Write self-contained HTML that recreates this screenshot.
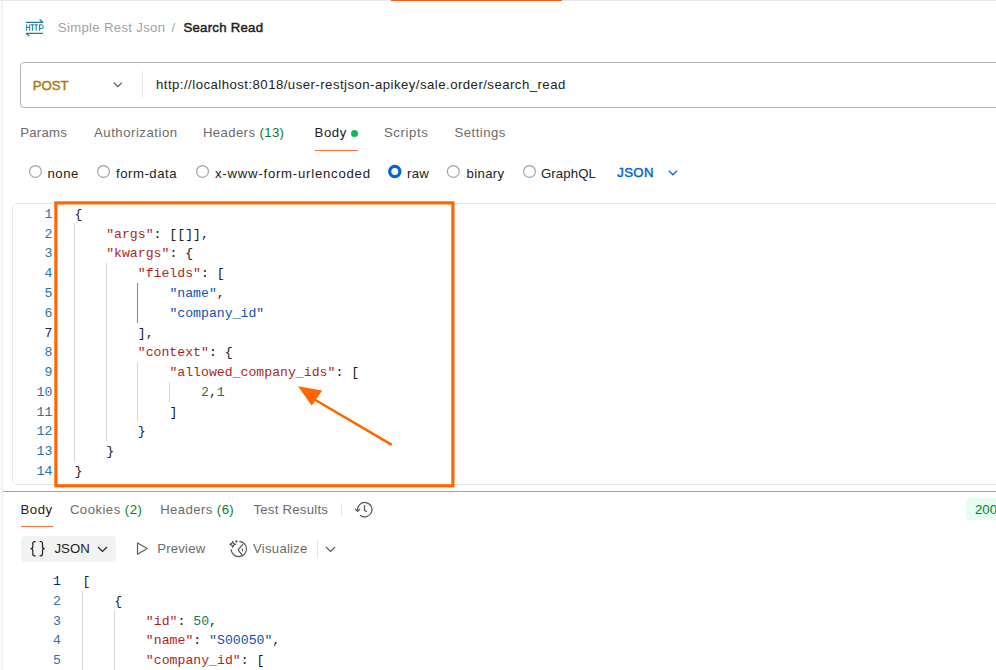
<!DOCTYPE html>
<html><head><meta charset="utf-8">
<style>
html,body{margin:0;padding:0;background:#fff;width:996px;height:670px;overflow:hidden;position:relative}
body{font-family:"Liberation Sans",sans-serif;font-size:13.18px;color:#212121}
.a{position:absolute;white-space:nowrap;line-height:16px;height:16px}
.m{font-family:"Liberation Mono",monospace;font-size:13.18px;line-height:19.77px;height:19.77px}
.gr{color:#007f31}
.k{color:#ad1f22}
.s{color:#0b52ac}
.n{color:#0e7d55}
.ln{position:absolute;text-align:right;width:60px;font-family:"Liberation Mono",monospace;font-size:13.18px;line-height:19.77px;height:19.77px}
.guide{position:absolute;width:1px}
</style></head><body>
<!-- frame -->
<div style="position:absolute;left:0;top:0;width:2px;height:670px;background:#f9f9f9"></div>
<div style="position:absolute;left:2px;top:0;width:1px;height:670px;background:#ededed"></div>
<div style="position:absolute;left:0;top:0;width:996px;height:1px;background:#e8e8e8"></div>
<div style="position:absolute;left:391px;top:0;width:171px;height:1px;background:#ff5a1f"></div>
<!-- http icon -->
<svg style="position:absolute;left:22px;top:16px" width="26" height="22" viewBox="0 0 26 22">
 <g fill="none" stroke="#127f92" stroke-width="1.2" stroke-linecap="butt">
  <path d="M3.8 6.4H21M17.6 3.5L21 6.4"/>
  <path d="M4 17.4H21M7.4 19.9L4 17.4"/>
 </g>
 <g fill="none" stroke="#127f92" stroke-width="1.0" stroke-linecap="butt">
  <path d="M4.7 8.3V14.8M7.7 8.3V14.8M4.7 11.4H7.7"/>
  <path d="M8.7 8.8H12.1M10.4 8.8V14.8"/>
  <path d="M12.5 8.8H15.9M14.2 8.8V14.8"/>
  <path d="M17.6 8.3V14.8M17.6 8.8H19.4Q21.3 8.8 21.3 10.7Q21.3 12.5 19.4 12.5H17.6"/>
 </g>
</svg>
<!-- url box -->
<div style="position:absolute;left:20px;top:62px;width:1000px;height:44px;border:1px solid #b6b6b6;border-radius:4px"></div>
<svg style="position:absolute;left:112px;top:81px" width="12" height="8" viewBox="0 0 12 8"><path d="M1.8 1.6L5.8 5.6L9.8 1.6" fill="none" stroke="#555" stroke-width="1.2"/></svg>
<div style="position:absolute;left:142px;top:71px;width:1px;height:27px;background:#e6e6e6"></div>
<!-- tabs -->
<div style="position:absolute;left:351px;top:130px;width:7px;height:7px;border-radius:50%;background:#0cbb52"></div>
<div style="position:absolute;left:315px;top:150px;width:43px;height:1px;background:#ff6c37"></div>
<!-- radios -->
<svg style="position:absolute;left:0;top:150px" width="700" height="40" viewBox="0 150 700 40">
 <g fill="none" stroke="#a3a3a3" stroke-width="1.15">
  <circle cx="35.45" cy="171.45" r="5.9"/>
  <circle cx="103.5" cy="171.45" r="5.9"/>
  <circle cx="202.5" cy="171.45" r="5.9"/>
  <circle cx="453.3" cy="171.45" r="5.9"/>
  <circle cx="529.5" cy="171.45" r="5.9"/>
 </g>
 <circle cx="394.8" cy="171.5" r="5.1" fill="none" stroke="#0265d2" stroke-width="3.2"/>
</svg>
<svg style="position:absolute;left:667px;top:168px" width="12" height="9" viewBox="0 0 12 9"><path d="M1.7 2.6L5.9 6.8L10.1 2.6" fill="none" stroke="#0265d2" stroke-width="1.3"/></svg>
<!-- editor frame -->
<div style="position:absolute;left:12px;top:205px;width:1px;height:278px;background:#e6e6e6"></div>
<div style="position:absolute;left:14px;top:203px;width:982px;height:1px;background:#e6e6e6"></div>
<div style="position:absolute;left:14px;top:484px;width:982px;height:1px;background:#e6e6e6"></div>
<div style="position:absolute;left:3px;top:491px;width:993px;height:1px;background:#74a9f0"></div>
<!-- annotation rect -->
<svg style="position:absolute;left:0;top:0;z-index:5" width="996" height="670" viewBox="0 0 996 670">
 <rect x="55.9" y="202.9" width="397" height="282.9" fill="none" stroke="#ff6600" stroke-width="3.2"/>
 <path d="M391.8 444.9L312 398" stroke="#ff6600" stroke-width="2.6" fill="none"/>
 <path d="M298 386.2L322.2 390.4L311.8 405.8Z" fill="#ff6600"/>
</svg>
<!-- response tabs -->
<div style="position:absolute;left:21px;top:526px;width:32px;height:1px;background:#ff6c37"></div>
<div style="position:absolute;left:341px;top:503px;width:1px;height:13px;background:#e6e6e6"></div>
<svg style="position:absolute;left:350px;top:498px" width="28" height="24" viewBox="0 0 28 24"><g fill="none" stroke="#555" stroke-width="1.25" stroke-linejoin="round" stroke-linecap="round">
 <path d="M10.4 17.4A7.2 7.2 0 1 0 7.6 12.6"/>
 <path d="M5.5 11.3L7.6 13.4L9.7 11.4"/>
 <path d="M14.5 7.5V12.2L16.5 13.6"/>
</g></svg>
<div style="position:absolute;left:966px;top:498px;width:40px;height:22px;border-radius:4px;background:#e6fdf0"></div>
<!-- response toolbar -->
<div style="position:absolute;left:21px;top:536px;width:95px;height:26px;border-radius:4px;background:#f2f2f2"></div>
<svg style="position:absolute;left:24px;top:536px" width="28" height="26" viewBox="0 0 28 26"><g fill="none" stroke="#212121" stroke-width="1.2">
 <path d="M11.6 5.6H10.6Q8.8 5.6 8.8 7.6V10.9Q8.8 12.5 6.6 12.6Q8.8 12.7 8.8 14.4V17.8Q8.8 19.8 10.6 19.8H11.6"/>
 <path d="M15.7 5.6H16.7Q18.5 5.6 18.5 7.6V10.9Q18.5 12.5 20.7 12.6Q18.5 12.7 18.5 14.4V17.8Q18.5 19.8 16.7 19.8H15.7"/>
</g></svg>
<svg style="position:absolute;left:96px;top:544.5px" width="13" height="9" viewBox="0 0 13 9"><path d="M2 2L6.5 6.5L11 2" fill="none" stroke="#212121" stroke-width="1.2"/></svg>
<svg style="position:absolute;left:134px;top:540px" width="16" height="17" viewBox="0 0 16 17"><path d="M3.5 2.9L13.3 8.6L3.5 14.3Z" fill="none" stroke="#5e5e5e" stroke-width="1.2" stroke-linejoin="round"/></svg>
<svg style="position:absolute;left:224px;top:536px" width="28" height="26" viewBox="0 0 28 26"><g fill="none" stroke="#555" stroke-width="1.2" stroke-linejoin="round">
 <path d="M15.4 5.3A7.7 7.7 0 1 1 7.1 13.2"/>
 <path d="M19 8.2L14.1 13.8L18.3 19.4"/>
 <path d="M18.4 12.4V15.4" stroke-width="1.1"/>
 <path d="M8.7 5.2Q9 8 11.8 8.3Q9 8.6 8.7 11.4Q8.4 8.6 5.6 8.3Q8.4 8 8.7 5.2Z" stroke-width="1.1"/>
 <path d="M12.4 4.2V6.6M11.2 5.4H13.6" stroke-width="1"/>
</g></svg>
<div style="position:absolute;left:317px;top:540px;width:1px;height:18px;background:#e6e6e6"></div>
<svg style="position:absolute;left:324px;top:544.7px" width="13" height="9" viewBox="0 0 13 9"><path d="M2 2L6.5 6.5L11 2" fill="none" stroke="#5a5a5a" stroke-width="1.2"/></svg>

<div class="guide" style="left:74px;top:223.7px;height:237.2px;background:#d6d6d6"></div>
<div class="guide" style="left:106px;top:263.2px;height:177.9px;background:#d6d6d6"></div>
<div class="guide" style="left:137px;top:283.0px;height:39.5px;background:#858585"></div>
<div class="guide" style="left:137px;top:362.1px;height:59.3px;background:#d6d6d6"></div>
<div class="guide" style="left:169px;top:381.9px;height:19.8px;background:#d6d6d6"></div>
<div class="guide" style="left:82px;top:591.3px;height:78.7px;background:#d6d6d6"></div>
<div class="guide" style="left:114px;top:611.0px;height:59.0px;background:#d6d6d6"></div>
<div id="crumb1" class="a" style="left:57.80px;top:20.30px;letter-spacing:0.320px;color:#a3a3a3">Simple Rest Json</div>
<div id="slash" class="a" style="left:171.50px;top:20.30px;letter-spacing:0.000px;color:#a3a3a3">/</div>
<div id="crumb2" class="a" style="left:183.40px;top:20.30px;letter-spacing:0.270px;color:#212121;-webkit-text-stroke:0.45px #212121">Search Read</div>
<div id="post" class="a" style="left:32.70px;top:78.10px;letter-spacing:0.000px;color:#a8790c;-webkit-text-stroke:0.45px #a8790c">POST</div>
<div id="url" class="a" style="left:156.00px;top:77.00px;letter-spacing:0.469px;color:#212121">http://localhost:8018/user-restjson-apikey/sale.order/search_read</div>
<div id="params" class="a" style="left:20.20px;top:125.00px;letter-spacing:0.240px;color:#6b6b6b">Params</div>
<div id="auth" class="a" style="left:94.00px;top:125.00px;letter-spacing:0.518px;color:#6b6b6b">Authorization</div>
<div id="headers" class="a" style="left:202.90px;top:125.00px;letter-spacing:0.383px;color:#6b6b6b">Headers <span class="gr">(13)</span></div>
<div id="body" class="a" style="left:314.50px;top:125.00px;letter-spacing:0.600px;color:#212121">Body</div>
<div id="scripts" class="a" style="left:383.90px;top:125.00px;letter-spacing:0.634px;color:#6b6b6b">Scripts</div>
<div id="settings" class="a" style="left:454.60px;top:125.00px;letter-spacing:0.459px;color:#6b6b6b">Settings</div>
<div id="none" class="a" style="left:47.50px;top:165.90px;letter-spacing:0.534px;color:#212121">none</div>
<div id="formdata" class="a" style="left:116.00px;top:165.90px;letter-spacing:0.525px;color:#212121">form-data</div>
<div id="xwww" class="a" style="left:215.00px;top:165.90px;letter-spacing:0.760px;color:#212121">x-www-form-urlencoded</div>
<div id="raw" class="a" style="left:407.10px;top:165.90px;letter-spacing:0.200px;color:#212121">raw</div>
<div id="binary" class="a" style="left:466.60px;top:165.90px;letter-spacing:0.320px;color:#212121">binary</div>
<div id="graphql" class="a" style="left:540.90px;top:165.90px;letter-spacing:0.133px;color:#212121">GraphQL</div>
<div id="json" class="a" style="left:617.20px;top:164.70px;letter-spacing:0.400px;color:#0265d2;-webkit-text-stroke:0.45px #0265d2">JSON</div>
<div id="rbody" class="a" style="left:20.60px;top:502.10px;letter-spacing:0.466px;color:#212121">Body</div>
<div id="cookies" class="a" style="left:69.90px;top:502.10px;letter-spacing:0.460px;color:#6b6b6b">Cookies <span class="gr">(2)</span></div>
<div id="headers6" class="a" style="left:160.20px;top:502.10px;letter-spacing:0.400px;color:#6b6b6b">Headers <span class="gr">(6)</span></div>
<div id="tests" class="a" style="left:253.40px;top:502.10px;letter-spacing:0.253px;color:#6b6b6b">Test Results</div>
<div id="ok" class="a" style="left:975.00px;top:502.30px;letter-spacing:0.000px;color:#007f31">200 OK</div>
<div id="jsonbtn" class="a" style="left:54.40px;top:541.00px;letter-spacing:0.066px;color:#212121">JSON</div>
<div id="preview" class="a" style="left:157.20px;top:541.00px;letter-spacing:0.200px;color:#6b6b6b">Preview</div>
<div id="visualize" class="a" style="left:253.10px;top:541.00px;letter-spacing:0.225px;color:#6b6b6b">Visualize</div>
<div class="ln" style="left:-7.60px;top:204.90px;color:#2874a8">1</div>
<div class="a m" style="left:74.50px;top:204.90px">{</div>
<div class="ln" style="left:-7.60px;top:224.67px;color:#2874a8">2</div>
<div class="a m" style="left:106.13px;top:224.67px"><span class="k">"args"</span>: [[]],</div>
<div class="ln" style="left:-7.60px;top:244.44px;color:#2874a8">3</div>
<div class="a m" style="left:106.13px;top:244.44px"><span class="k">"kwargs"</span>: {</div>
<div class="ln" style="left:-7.60px;top:264.21px;color:#2874a8">4</div>
<div class="a m" style="left:137.76px;top:264.21px"><span class="k">"fields"</span>: [</div>
<div class="ln" style="left:-7.60px;top:283.98px;color:#2874a8">5</div>
<div class="a m" style="left:169.40px;top:283.98px"><span class="s">"name"</span>,</div>
<div class="ln" style="left:-7.60px;top:303.75px;color:#2874a8">6</div>
<div class="a m" style="left:169.40px;top:303.75px"><span class="s">"company_id"</span></div>
<div class="ln" style="left:-7.60px;top:323.52px;color:#0f1f78">7</div>
<div class="a m" style="left:137.76px;top:323.52px">],</div>
<div class="ln" style="left:-7.60px;top:343.29px;color:#2874a8">8</div>
<div class="a m" style="left:137.76px;top:343.29px"><span class="k">"context"</span>: {</div>
<div class="ln" style="left:-7.60px;top:363.06px;color:#2874a8">9</div>
<div class="a m" style="left:169.40px;top:363.06px"><span class="k">"allowed_company_ids"</span>: [</div>
<div class="ln" style="left:-7.60px;top:382.83px;color:#2874a8">10</div>
<div class="a m" style="left:201.03px;top:382.83px"><span class="n">2</span>,<span class="n">1</span></div>
<div class="ln" style="left:-7.60px;top:402.60px;color:#2874a8">11</div>
<div class="a m" style="left:169.40px;top:402.60px">]</div>
<div class="ln" style="left:-7.60px;top:422.37px;color:#2874a8">12</div>
<div class="a m" style="left:137.76px;top:422.37px">}</div>
<div class="ln" style="left:-7.60px;top:442.14px;color:#2874a8">13</div>
<div class="a m" style="left:106.13px;top:442.14px">}</div>
<div class="ln" style="left:-7.60px;top:461.91px;color:#2874a8">14</div>
<div class="a m" style="left:74.50px;top:461.91px">}</div>
<div class="ln" style="left:1.00px;top:572.00px;color:#0f1f78">1</div>
<div class="a m" style="left:82.60px;top:572.00px">[</div>
<div class="ln" style="left:1.00px;top:591.77px;color:#2874a8">2</div>
<div class="a m" style="left:114.23px;top:591.77px">{</div>
<div class="ln" style="left:1.00px;top:611.54px;color:#2874a8">3</div>
<div class="a m" style="left:145.86px;top:611.54px"><span class="k">"id"</span>: <span class="n">50</span>,</div>
<div class="ln" style="left:1.00px;top:631.31px;color:#2874a8">4</div>
<div class="a m" style="left:145.86px;top:631.31px"><span class="k">"name"</span>: <span class="s">"S00050"</span>,</div>
<div class="ln" style="left:1.00px;top:651.08px;color:#2874a8">5</div>
<div class="a m" style="left:145.86px;top:651.08px"><span class="k">"company_id"</span>: [</div>
</body></html>
